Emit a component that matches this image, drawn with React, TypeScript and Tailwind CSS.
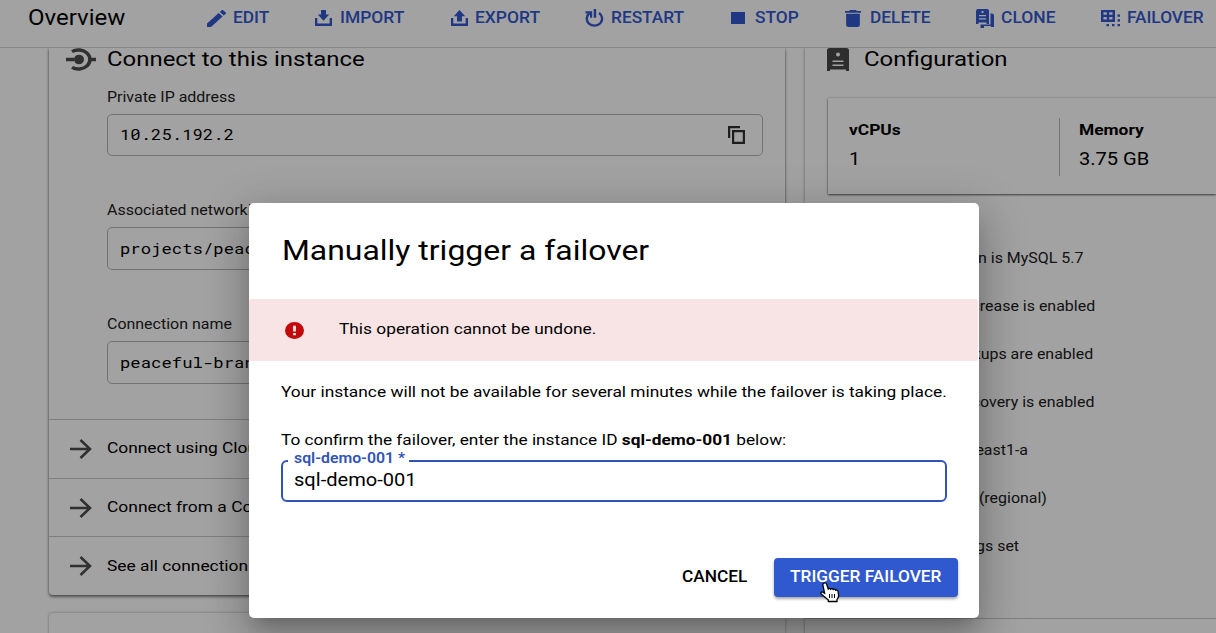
import React from 'react';

type IconProps = { box: string; className: string; children: React.ReactNode };

function Icon({ box, className, children }: IconProps) {
  return (
    <svg viewBox={box} preserveAspectRatio="none" className={className} fill="currentColor" aria-hidden="true">
      {children}
    </svg>
  );
}

const wide = 'inline-block origin-left whitespace-nowrap';

const actions = [
  {
    label: 'EDIT', gap: 'w-[26px]', scale: 'scale-x-[1.08]',
    icon: (
      <Icon box="3 3 18 18" className="h-[17px] w-[19px]">
        <path d="M3 17.25V21h3.75L17.81 9.94l-3.75-3.75zM20.71 7.04a1 1 0 0 0 0-1.41l-2.34-2.34a1 1 0 0 0-1.41 0l-1.83 1.83 3.75 3.75z" />
      </Icon>
    ),
  },
  {
    label: 'IMPORT', gap: 'w-[25px]', scale: 'scale-x-[1.09]',
    icon: (
      <Icon box="0 0 17 16" className="h-4 w-[17px]">
        <path d="M6 0h5v4.500h3.200L8.500 10.800 2.800 4.500H6zM0 8h2.300v5.500h12.400V8H17v8H0z" />
      </Icon>
    ),
  },
  {
    label: 'EXPORT', gap: 'w-6', scale: 'scale-x-[1.09]',
    icon: (
      <Icon box="0 0 17 16" className="h-4 w-[17px]">
        <path d="M8.500 0l5.700 6.200H11V11.500H6V6.200H2.800zM0 8h2.300v5.500h12.400V8H17v8H0z" />
      </Icon>
    ),
  },
  {
    label: 'RESTART', gap: 'w-[26px]', scale: 'scale-x-[1.08]',
    icon: (
      <Icon box="0 0 19 18" className="h-[18px] w-[19px]">
        <path d="M4.500 4.300A7.700 7 0 1 0 14 4" fill="none" stroke="currentColor" strokeWidth="2.400" />
        <path d="M0.500 2.300h6.700v6.500H5V4.500H0.500zM8.700 0h2.500v8.800H8.700z" />
      </Icon>
    ),
  },
  {
    label: 'STOP', gap: 'w-6', scale: 'scale-x-[1.08]',
    icon: (
      <Icon box="0 0 14 12" className="h-3 w-3.5">
        <path d="M0 0h14v12H0z" />
      </Icon>
    ),
  },
  {
    label: 'DELETE', gap: 'w-[25.5px]', scale: 'scale-x-[1.08]',
    icon: (
      <Icon box="5 3 14 18" className="ml-px h-[17px] w-4">
        <path d="M6 19a2 2 0 0 0 2 2h8a2 2 0 0 0 2-2V7H6zM19 4h-3.500l-1-1h-5l-1 1H5v2h14z" />
      </Icon>
    ),
  },
  {
    label: 'CLONE', gap: 'w-[25px]', scale: 'scale-x-[1.09]',
    icon: (
      <Icon box="0 0 18 19" className="h-[19px] w-[18px]">
        <path fillRule="evenodd" d="M2 0h9a2 2 0 0 1 2 2v13h-2.500v-1.500h-8V15H0V2a2 2 0 0 1 2-2zm3.500 2v2h2V2zM3 6v1.200h7V6zm0 3.200v1.200h7V9.200z" />
        <path d="M14.500 4.500H16a2 2 0 0 1 2 2V18h-3v-1H8v2H4.500v-3.500h10z" />
      </Icon>
    ),
  },
  {
    label: 'FAILOVER', gap: 'w-[27px]', scale: 'scale-x-[1.08]',
    icon: (
      <Icon box="0 0 20 17" className="ml-px h-[17px] w-5">
        <path fillRule="evenodd" d="M0 0h14v12H0zm2.500 2.200v2.600h3.300V2.200zm5.700 0v2.600h3.300V2.200zM2.500 7v2.600h3.300V7zm5.700 0v2.600h3.300V7z" />
        <path d="M16.500 4.500H19v2.300h-2.500zM16.500 9.300H19v2.300h-2.500zM16.500 14H19v2.300h-2.500zM5.500 14H8v2.300H5.500zM11 14h2.500v2.300H11z" />
      </Icon>
    ),
  },
];

function Header() {
  return (
    <header className="flex h-12 shrink-0 items-start border-b border-[#d4d4d4] bg-white pl-7">
      <h1 className="mt-[3px] w-[179px] shrink-0 text-[22px] leading-[29px] text-black">
        <span className={wide + ' scale-x-[1.09]'}>Overview</span>
      </h1>
      <nav className="grid h-9 shrink-0 grid-cols-[108px_136px_134px_146px_113px_132px_124px_116px] items-center text-[#3358d0]">
        {actions.map((a) => (
          <button key={a.label} className="flex items-center text-base font-medium">
            <span className={'shrink-0 ' + a.gap}>{a.icon}</span>
            <span className={wide + ' ' + a.scale}>{a.label}</span>
          </button>
        ))}
      </nav>
    </header>
  );
}

function Field({ label, value, copy, className }: { label: string; value: string; copy?: boolean; className: string }) {
  return (
    <div className={'flex flex-col ' + className}>
      <div className="h-[27px] text-sm leading-[20px] text-[#202020]">
        <span className={wide + ' scale-x-[1.14]'}>{label}</span>
      </div>
      <div className={(copy ? 'h-[42px]' : 'h-[42.5px]') + ' flex items-center justify-between rounded-[5px] border border-[#b4b4b4] pr-[17px] pl-3'}>
        <span className={wide + ' scale-x-[1.115] font-["Roboto_Mono","DejaVu_Sans_Mono",monospace] text-[15.5px] text-black'}>{value}</span>
        {copy && (
          <Icon box="0 0 17 18" className="h-[18px] w-[17px] text-[#303030]">
            <path fillRule="evenodd" d="M0 0h12v2.200H2.200V12H0zM4 4h13v14H4zm2.200 2.200v9.600h8.600V6.200z" />
          </Icon>
        )}
      </div>
    </div>
  );
}

const links = [
  { text: 'Connect using Cloud Shell', scale: 'scale-x-[1.12]' },
  { text: 'Connect from a Compute Engine VM', scale: 'scale-x-[1.125]' },
  { text: 'See all connection methods', scale: 'scale-x-[1.12]' },
];

function ConnectCard() {
  return (
    <section className="flex h-[548px] flex-col rounded-b-[4px] bg-white shadow-[0_2px_3px_rgba(0,0,0,0.45),0_0_3px_rgba(0,0,0,0.3)]">
      <div className="flex h-[39px] shrink-0 items-start pl-[17px]">
        <Icon box="0 0 30 24" className="h-[23px] w-[30px] text-[#4c4c4c]">
          <path d="M6 3.800A11.400 10 0 1 1 6 20.200" fill="none" stroke="currentColor" strokeWidth="3.600" />
          <path d="M0 10.100h8v3.800H0zM24 10.100h6v3.800h-6z" />
          <circle cx="13" cy="12" r="5" />
        </Icon>
        <h2 className="-mt-[3px] ml-[11px] text-[21px] leading-[28px] text-black">
          <span className={wide + ' scale-x-[1.14]'}>Connect to this instance</span>
        </h2>
      </div>
      <div className="flex h-[332px] shrink-0 flex-col pr-[22px] pl-[58.4px]">
        <Field className="h-[113px]" label="Private IP address" value="10.25.192.2" copy />
        <Field className="h-[114px]" label="Associated networking" value="projects/peaceful" />
        <Field className="h-[70px]" label="Connection name" value="peaceful-branch-2" />
      </div>
      {links.map((l) => (
        <a key={l.text} className="flex h-[58.7px] shrink-0 items-center border-t border-[#c8c8c8] pl-[20.5px] text-[15.5px] text-black">
          <Icon box="0 0 22 20" className="h-5 w-[22px] text-[#4c4c4c]">
            <path d="M0 10h20M10.500 1l9.500 9-9.500 9" fill="none" stroke="currentColor" strokeWidth="2.500" />
          </Icon>
          <span className={wide + ' ml-[15.5px] ' + l.scale}>{l.text}</span>
        </a>
      ))}
    </section>
  );
}

const settings = [
  { text: 'Database version is MySQL 5.7', scale: 'scale-x-[1.1]' },
  { text: 'Auto storage increase is enabled', scale: 'scale-x-[1.1]' },
  { text: 'Automated backups are enabled', scale: 'scale-x-[1.1]' },
  { text: 'Point-in-time recovery is enabled', scale: 'scale-x-[1.1]' },
  { text: 'Located in us-east1-a', scale: 'ml-3 scale-x-[1.1]' },
  { text: 'Highly available (regional)', scale: 'scale-x-[1.1]' },
  { text: 'No database flags set', scale: 'scale-x-[1.1]' },
];

function ConfigurationCard() {
  return (
    <section className="flex h-[600px] flex-col bg-white shadow-[0_0_3px_rgba(0,0,0,0.4)]">
      <div className="flex h-[50px] shrink-0 items-start pl-[21.5px]">
        <Icon box="0 0 22 23" className="h-[23px] w-[22px] text-[#484848]">
          <path fillRule="evenodd" d="M2.500 0h17A2.500 2.500 0 0 1 22 2.500V23h-3v-1.500H3V23H0V2.500A2.500 2.500 0 0 1 2.500 0zM11 4.500a2 2 0 1 0 0 4 2 2 0 0 0 0-4zM5.500 12.500V14h11v-1.500zm0 4V18h11v-1.500z" />
        </Icon>
        <h2 className="-mt-[3px] ml-[15.5px] text-[21px] leading-[28px] text-black">
          <span className={wide + ' scale-x-[1.14]'}>Configuration</span>
        </h2>
      </div>
      <div className="ml-[23px] flex h-[96px] shrink-0 items-center bg-white pt-px pl-[21px] shadow-[0_1px_2px_rgba(0,0,0,0.6),0_0_2px_rgba(0,0,0,0.2)]">
        <div className="h-[58px] w-[211px] border-r border-[#b8b8b8] text-black">
          <div className="text-[15.5px] leading-6 font-bold"><span className={wide + ' scale-x-[1.12]'}>vCPUs</span></div>
          <div className="mt-[5px] text-[18px] leading-6"><span className={wide + ' scale-x-[1.11]'}>1</span></div>
        </div>
        <div className="h-[58px] pl-[19px] text-black">
          <div className="text-[15.5px] leading-6 font-bold"><span className={wide + ' scale-x-[1.12]'}>Memory</span></div>
          <div className="mt-[5px] text-[18px] leading-6"><span className={wide + ' scale-x-[1.115]'}>3.75 GB</span></div>
        </div>
      </div>
      <ul className="mt-[39px] flex h-[386px] shrink-0 flex-col border-b border-[#c8c8c8] pt-[2px] pl-[59px] text-[14.5px] text-[#202020]">
        {settings.map((s) => (
          <li key={s.text} className="flex h-12 shrink-0 items-center">
            <span className={wide + ' ' + s.scale}>{s.text}</span>
          </li>
        ))}
      </ul>
    </section>
  );
}

function FailoverDialog() {
  return (
    <div role="dialog" className="relative flex h-[415px] w-[730.4px] flex-col rounded-[5px] bg-white text-black shadow-[0_11px_15px_-7px_rgba(0,0,0,0.2),0_24px_38px_3px_rgba(0,0,0,0.14),0_9px_46px_8px_rgba(0,0,0,0.14)]">
      <h2 className="h-24 shrink-0 pt-[30px] pl-[33px] text-[28px] leading-9">
        <span className={wide + ' scale-x-[1.14]'}>Manually trigger a failover</span>
      </h2>
      <div className="mr-px flex h-[62px] shrink-0 items-center rounded-[2px] bg-[#f8e4e4] pl-9">
        <Icon box="2 2 20 20" className="h-[17px] w-[19px] text-[#c20a0c]">
          <path d="M12 2a10 10 0 1 0 0 20 10 10 0 0 0 0-20zm1.500 15.500h-3v-2.500h3zm0-4.300h-3V6.300h3z" />
        </Icon>
        <span className={wide + ' ml-[35px] scale-x-[1.117] text-[15.5px]'}>This operation cannot be undone.</span>
      </div>
      <div className="flex flex-1 flex-col px-8 pt-5 text-[15.5px] leading-[22px]">
        <p className="h-[22px]"><span className={wide + ' scale-x-[1.118]'}>Your instance will not be available for several minutes while the failover is taking place.</span></p>
        <p className="mt-[26px] h-[22px]">
          <span className={wide + ' scale-x-[1.113]'}>To confirm the failover, enter the instance ID <b>sql-demo-001</b> below:</span>
        </p>
        <div className="relative mt-[9px] flex h-[41.5px] items-center rounded-[6px] border-[2.5px] border-[#3054b8] pb-[2px] pl-[11px] text-[18px]">
          <span className="absolute -top-[14px] left-[5px] h-[22px] w-[121px] bg-white pl-[6px] text-sm leading-[21px] font-semibold text-[#3054b8]">
            <span className={wide + ' scale-x-[1.13]'}>sql-demo-001 *</span>
          </span>
          <span className={wide + ' scale-x-[1.115]'}>sql-demo-001</span>
        </div>
        <div className="mt-[56px] -mr-[10.5px] flex justify-end text-base font-medium">
          <button className="mr-2 flex h-[39px] w-[95px] items-center pb-px pl-[11px]">
            <span className={wide + ' scale-x-[1.08]'}>CANCEL</span>
          </button>
          <button className="flex h-[39px] w-[184px] items-center rounded-[4px] bg-[#3058cf] pb-px pl-4 text-white shadow-[0_2px_3px_rgba(0,0,0,0.35)]">
            <span className={wide + ' scale-x-[1.08]'}>TRIGGER FAILOVER</span>
          </button>
        </div>
      </div>
      <svg viewBox="0 0 20 21" className="absolute top-[379px] left-[571px] h-[21px] w-5" aria-hidden="true">
        <path d="M4 1.200C5 .6 6.200 1 6.600 2l1.600 5c.7-.9 2-.8 2.500.2.700-.8 2-.7 2.500.3.900-.7 2.100-.3 2.500.7.900-.5 2 0 2.300 1l.6 4c.1 1.500-.7 3-1.600 4.300v2H8.300v-1.500L3.500 14 1 11.800c-.7-1 .4-2.300 1.600-1.700l2 1.100L2.900 3.200c-.2-.8.200-1.600 1.100-2z" fill="white" stroke="black" strokeWidth="1.300" />
        <path d="M9.500 12v4M12 12v4M14.500 12v4" stroke="black" strokeWidth="1" />
      </svg>
    </div>
  );
}

export default function App() {
  return (
    <div className="relative h-[633px] w-[1216px] overflow-hidden bg-white font-[Roboto,sans-serif]">
      <div className="flex h-full flex-col">
        <Header />
        <main className="flex flex-1 gap-5 overflow-hidden pl-[49px]">
          <div className="flex w-[736.4px] shrink-0 flex-col gap-[18px]">
            <ConnectCard />
            <section className="h-10 shrink-0 rounded-t-[4px] bg-white shadow-[0_0_3px_rgba(0,0,0,0.35)]" />
          </div>
          <div className="flex-1">
            <ConfigurationCard />
          </div>
        </main>
      </div>
      <div className="absolute inset-0 bg-black/[0.365] pt-[203px] pl-[249px]">
        <FailoverDialog />
      </div>
    </div>
  );
}
